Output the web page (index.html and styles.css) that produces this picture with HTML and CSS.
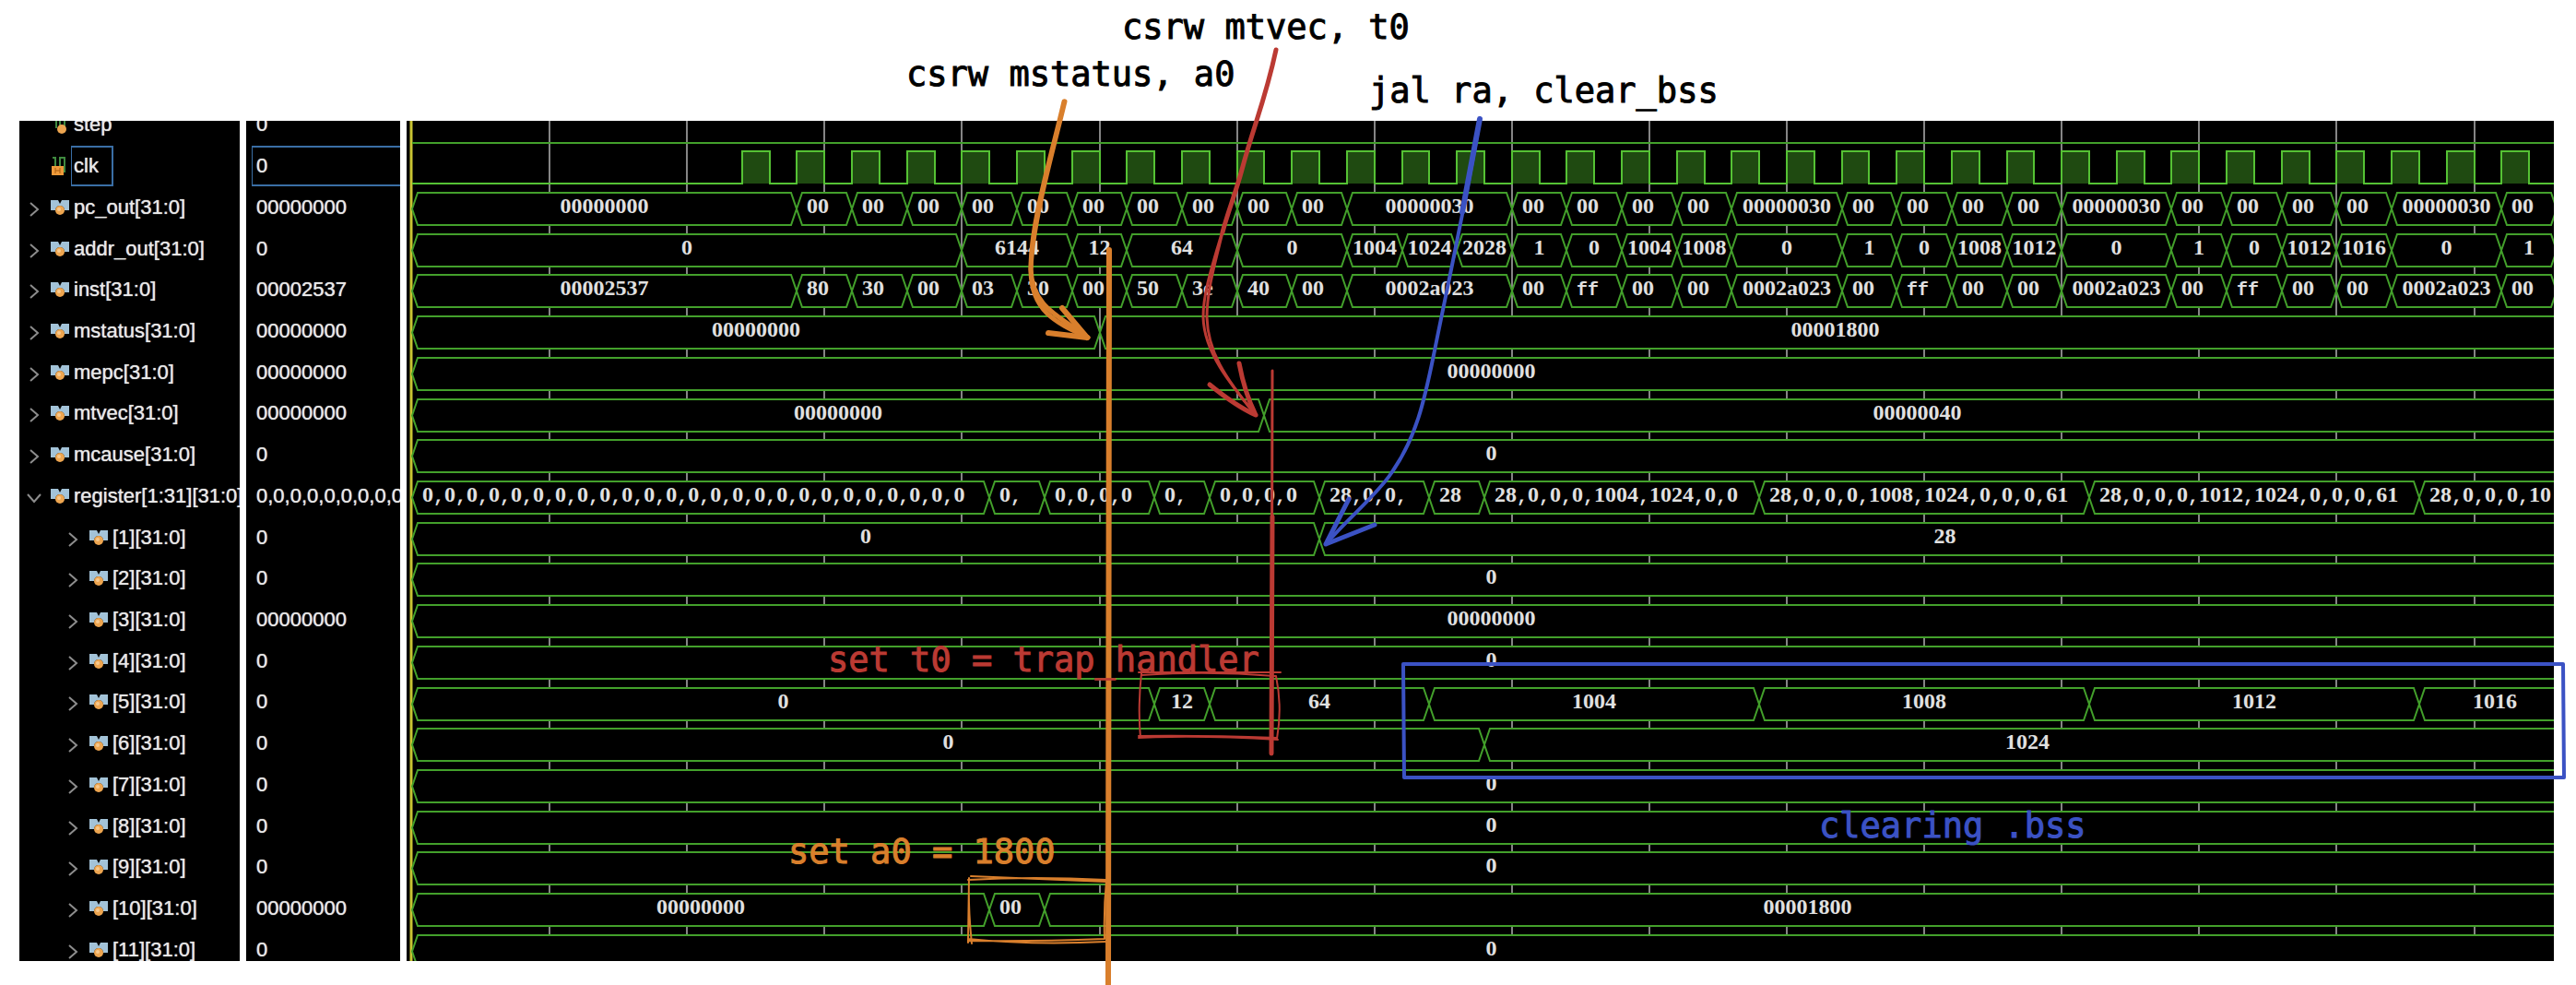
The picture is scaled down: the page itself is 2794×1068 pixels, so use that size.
FILE: index.html
```html
<!DOCTYPE html>
<html lang="en">
<head>
  <meta charset="utf-8">
  <meta name="viewport" content="width=device-width, initial-scale=1">
  <title>Boot waveform</title>
  <link rel="stylesheet" href="styles.css">
</head>
<body>
  <svg class="symbols" aria-hidden="true">
    <symbol id="icon-bus" viewBox="0 0 20 16">
      <path d="M0 0h8l2 4 2-4h8v11h-5a5 5 0 0 0-10 0H0z" fill="#a3c3d8"/>
      <circle cx="10" cy="11" r="5" fill="#eda550"/>
      <circle cx="9" cy="10" r="2" fill="#f8c98c"/>
    </symbol>
    <symbol id="icon-bit" viewBox="0 0 20 20">
      <path d="M3 1h3v13M10 14V1h5v12" fill="none" stroke="#3f8a3f" stroke-width="2"/>
      <circle cx="12" cy="15" r="5" fill="#eda550"/>
    </symbol>
    <symbol id="icon-clock" viewBox="0 0 20 20">
      <path d="M2 1h3v9M10 10V1h5v16" fill="none" stroke="#3f8a3f" stroke-width="2"/>
      <path d="M1 10h13v10H1z" fill="#ee9a3a"/>
      <path d="M5 12v6M10 12v6M5 15h5" fill="none" stroke="#a85c10" stroke-width="1"/>
    </symbol>
    <symbol id="icon-closed" viewBox="0 0 16 16">
      <path d="M4 1l8 7-8 7" fill="none" stroke="#8d8d8d" stroke-width="2"/>
    </symbol>
    <symbol id="icon-open" viewBox="0 0 16 16">
      <path d="M1 4l7 8 7-8" fill="none" stroke="#8d8d8d" stroke-width="2"/>
    </symbol>
  </svg>

  <main class="figure">
    <section class="viewer" aria-label="Waveform viewer">
      <div class="pane names"><ul class="rows" id="names"></ul></div>
      <div class="pane values"><ul class="rows" id="values"></ul></div>
      <div class="pane waves"><svg class="plot" id="plot" role="img" aria-label="Signal waveforms"></svg></div>
    </section>

    <svg class="notes" viewBox="0 0 2794 1068">
      <g class="ink orange">
        <path class="w5" d="M1154 110C1139 175 1118 240 1118 292C1118 338 1146 350 1180 366"/>
        <path class="w5" d="M1155 110C1143 160 1120 240 1118 292C1120 334 1150 343 1180 366"/>
        <path class="w6" d="M1152 334L1179 366M1137 361L1179 366"/>
        <path class="w6" d="M1203 271L1202 1070"/>
        <path class="w2" d="M1053 950L1200 956M1050 954Q1120 950 1200 954M1051 952L1050 1022M1051 952Q1050 985 1054 1023M1050 1018Q1120 1025 1200 1021M1050 1020Q1120 1021 1198 1018M1200 955Q1197 985 1198 1018"/>
      </g>
      <g class="ink red">
        <path class="w5" d="M1384 54C1372 110 1360 135 1347 184C1340 210 1331 232 1326 252"/>
        <path class="w3" d="M1329 240C1316 285 1305 315 1305 344C1306 382 1334 416 1362 450"/>
        <path class="w3" d="M1326 252C1318 285 1309 315 1309 344C1310 380 1327 408 1362 450"/>
        <path class="w5" d="M1344 394Q1350 426 1362 450M1312 417Q1340 440 1362 450"/>
        <path class="w3" d="M1380 402L1379 817"/>
        <path class="w5" d="M1380 560L1379 817"/>
        <path class="w2" d="M1235 729L1389 729M1238 732Q1310 727 1383 733M1384 733Q1391 767 1385 801M1238 730Q1234 767 1237 800M1235 798Q1300 797 1385 800M1235 800Q1300 797 1386 802"/>
      </g>
      <g class="ink blue">
        <path class="w4" d="M1605 129C1594 200 1570 310 1555 385C1545 434 1536 475 1509 513C1494 536 1462 562 1438 590"/>
        <path class="w6" d="M1605 129L1586 230"/>
        <path class="w5" d="M1463 541L1438 590M1491 569L1438 590"/>
        <path class="w4" d="M1522 720H2780L2781 843H1523Z"/>
      </g>
      <g class="caption">
        <text x="1217" y="42">csrw mtvec, t0</text>
        <text x="983" y="93">csrw mstatus, a0</text>
        <text x="1485" y="111">jal ra, clear_bss</text>
        <text class="red" x="898" y="728">set t0 = trap_handler</text>
        <text class="orange" x="855" y="936">set a0 = 1800</text>
        <text class="blue" x="1973" y="908">clearing .bss</text>
      </g>
    </svg>
  </main>
  <script src="waves.js"></script>
</body>
</html>
```
FILE: styles.css
```css
* {
  box-sizing: border-box;
}

body {
  margin: 0;
  background: #fff;
  font-family: "Liberation Sans", Arial, sans-serif;
}

.symbols {
  display: none;
}

.figure {
  position: relative;
  padding: 131px 24px 26px 21px;
  overflow: hidden;
}

/* three panes separated by light splitters */
.viewer {
  display: grid;
  grid-template-columns: 239px 167px 1fr;
  gap: 7px;
  height: 911px;
}

.pane {
  overflow: hidden;
  background: #000;
}

.rows {
  display: flex;
  flex-direction: column;
  height: 939px;
  margin: -18px 0 0;
  padding: 0;
  list-style: none;
  color: #e8e8e8;
  font-size: 22px;
  text-shadow: 0 0 1px currentColor;
  white-space: nowrap;
}

.rows li {
  flex: 1;
  display: flex;
  align-items: center;
}

.names li {
  padding-left: 8px;
}

.names li.child {
  padding-left: 50px;
}

.toggle {
  flex: none;
  width: 16px;
  height: 16px;
  margin: 4px 10px 0 0;
  padding: 0;
  border: 0;
  background: none;
}

.toggle svg {
  display: block;
  width: 16px;
  height: 16px;
}

.icon {
  flex: none;
  width: 20px;
  height: 16px;
  margin-right: 2px;
}

.icon.bit {
  height: 20px;
}

.label {
  display: flex;
  align-items: center;
  align-self: stretch;
  padding: 0 14px 0 2px;
  border: 2px solid transparent;
  border-left-width: 1px;
}

.label.selected {
  border-color: #3a6ea5;
}

.values .label {
  flex: 1;
  margin-left: 6px;
  padding-left: 4px;
  border-right: 0;
}

.plot {
  display: block;
  width: 100%;
  height: 100%;
}

.grid {
  stroke: #858585;
  stroke-width: 2;
}

.cursor {
  stroke: #c9c432;
  stroke-width: 3;
}

.bus {
  fill: #000;
  stroke: #43a02b;
  stroke-width: 2;
}

.level {
  fill: none;
  stroke: #43a02b;
  stroke-width: 2;
}

.clock {
  fill: #1f4a11;
  stroke: #55c234;
  stroke-width: 2;
}

.value {
  fill: #e0e0e0;
  font: bold 24px "Liberation Serif", "Times New Roman", serif;
}

.value .cell {
  font: bold 20px "Liberation Mono", "Courier New", monospace;
}

/* hand-drawn remarks lie over the panes */
.notes {
  position: absolute;
  top: 0;
  left: 0;
  width: 100%;
  pointer-events: none;
}

.ink {
  fill: none;
  stroke: currentColor;
  stroke-linecap: round;
  stroke-linejoin: round;
}

.w2 { stroke-width: 2; }
.w3 { stroke-width: 3; }
.w4 { stroke-width: 4; }
.w5 { stroke-width: 5; }
.w6 { stroke-width: 6; }

.orange { color: #d97f2c; }
.red { color: #bb3a33; }
.blue { color: #3b52c4; }

.caption {
  font: 37px "DejaVu Sans Mono", monospace;
}

.caption text {
  fill: currentColor;
  stroke: currentColor;
  stroke-width: 1;
}
```
FILE: waves.js
```js
// Times are in clock periods; each change is [start, text].
// A text marked "<" did not fit its slot and is left-aligned.
const END = 39.25;
const VISIBLE = 38.95;
const ROWS = 21;
const OFFSET = 18;

const signals = [
  { name: "step", value: "0", icon: "bit", kind: "level" },
  { name: "clk", value: "0", icon: "clock", kind: "clock", selected: true },
  { name: "pc_out[31:0]", value: "00000000", wave: [[0, "00000000"], [7, "<00"], [8, "<00"], [9, "<00"], [10, "<00"], [11, "<00"], [12, "<00"], [13, "<00"], [14, "<00"], [15, "<00"], [16, "<00"], [17, "00000030"], [20, "<00"], [21, "<00"], [22, "<00"], [23, "<00"], [24, "00000030"], [26, "<00"], [27, "<00"], [28, "<00"], [29, "<00"], [30, "00000030"], [32, "<00"], [33, "<00"], [34, "<00"], [35, "<00"], [36, "00000030"], [38, "<00"], [39, ""]] },
  { name: "addr_out[31:0]", value: "0", wave: [[0, "0"], [10, "6144"], [12, "12"], [13, "64"], [15, "0"], [17, "1004"], [18, "1024"], [19, "2028"], [20, "1"], [21, "0"], [22, "1004"], [23, "1008"], [24, "0"], [26, "1"], [27, "0"], [28, "1008"], [29, "1012"], [30, "0"], [32, "1"], [33, "0"], [34, "1012"], [35, "1016"], [36, "0"], [38, "1"], [39, ""]] },
  { name: "inst[31:0]", value: "00002537", wave: [[0, "00002537"], [7, "<80"], [8, "<30"], [9, "<00"], [10, "<03"], [11, "<30"], [12, "<00"], [13, "<50"], [14, "<3e"], [15, "<40"], [16, "<00"], [17, "0002a023"], [20, "<00"], [21, "<ff"], [22, "<00"], [23, "<00"], [24, "0002a023"], [26, "<00"], [27, "<ff"], [28, "<00"], [29, "<00"], [30, "0002a023"], [32, "<00"], [33, "<ff"], [34, "<00"], [35, "<00"], [36, "0002a023"], [38, "<00"], [39, ""]] },
  { name: "mstatus[31:0]", value: "00000000", wave: [[0, "00000000"], [12.5, "00001800"]] },
  { name: "mepc[31:0]", value: "00000000", wave: [[0, "00000000"]] },
  { name: "mtvec[31:0]", value: "00000000", wave: [[0, "00000000"], [15.5, "00000040"]] },
  { name: "mcause[31:0]", value: "0", wave: [[0, "0"]] },
  { name: "register[1:31][31:0]", value: "0,0,0,0,0,0,0,0,0", open: true, wave: [[0, "<0,0,0,0,0,0,0,0,0,0,0,0,0,0,0,0,0,0,0,0,0,0,0,0,0"], [10.5, "<0,"], [11.5, "<0,0,0,0"], [13.5, "<0,"], [14.5, "<0,0,0,0"], [16.5, "<28,0,0,"], [18.5, "<28"], [19.5, "<28,0,0,0,1004,1024,0,0"], [24.5, "<28,0,0,0,1008,1024,0,0,0,61"], [30.5, "<28,0,0,0,1012,1024,0,0,0,61"], [36.5, "<28,0,0,0,10"]] },
  { name: "[1][31:0]", value: "0", child: true, wave: [[0, "0"], [16.5, "28"]] },
  { name: "[2][31:0]", value: "0", child: true, wave: [[0, "0"]] },
  { name: "[3][31:0]", value: "00000000", child: true, wave: [[0, "00000000"]] },
  { name: "[4][31:0]", value: "0", child: true, wave: [[0, "0"]] },
  { name: "[5][31:0]", value: "0", child: true, wave: [[0, "0"], [13.5, "12"], [14.5, "64"], [18.5, "1004"], [24.5, "1008"], [30.5, "1012"], [36.5, "1016"]] },
  { name: "[6][31:0]", value: "0", child: true, wave: [[0, "0"], [19.5, "1024"]] },
  { name: "[7][31:0]", value: "0", child: true, wave: [[0, "0"]] },
  { name: "[8][31:0]", value: "0", child: true, wave: [[0, "0"]] },
  { name: "[9][31:0]", value: "0", child: true, wave: [[0, "0"]] },
  { name: "[10][31:0]", value: "00000000", child: true, wave: [[0, "00000000"], [10.5, "<00"], [11.5, "00001800"]] },
  { name: "[11][31:0]", value: "0", child: true, wave: [[0, "0"]] }
];

function nameRow(s) {
  const toggle = s.kind
    ? '<span class="toggle"></span>'
    : `<button class="toggle" type="button" aria-label="Expand ${s.name}"><svg><use href="#icon-${s.open ? "open" : "closed"}"/></svg></button>`;
  return `<li class="${s.child ? "child" : ""}">${toggle}` +
    `<svg class="icon ${s.kind ? "bit" : ""}"><use href="#icon-${s.icon || "bus"}"/></svg>` +
    `<span class="label ${s.selected ? "selected" : ""}">${s.name}</span></li>`;
}

function valueRow(s) {
  return `<li><span class="label ${s.selected ? "selected" : ""}">${s.value}</span></li>`;
}

// Digits are half an em wide; commas and f go in cells of the same width.
function cells(text) {
  return text.replace(/[,f]+/g, m => `<tspan class="cell">${m}</tspan>`);
}

function draw() {
  const plot = document.getElementById("plot");
  const width = plot.clientWidth;
  const height = plot.clientHeight;
  const left = 6;
  const unit = (width - left) / VISIBLE;
  const x = t => Math.round(left + unit * t);
  const rowHeight = (height + 28) / ROWS;
  let out = "";

  for (let t = 2.5; t < END; t += 2.5) {
    out += `<line class="grid" x1="${x(t)}" x2="${x(t)}" y1="0" y2="${height}"/>`;
  }
  out += `<line class="cursor" x1="${left - 1}" x2="${left - 1}" y1="0" y2="${height}"/>`;

  signals.forEach((s, i) => {
    const y = Math.floor(i * rowHeight) - OFFSET;
    const top = y + 7;
    const bottom = y + 42;
    if (s.kind === "level") {
      out += `<path class="level" d="M${left} ${bottom}H${width}"/>`;
      return;
    }
    if (s.kind === "clock") {
      let d = `M${left} ${bottom}`;
      for (let t = 6; t < VISIBLE; t += 1) {
        d += `H${x(t)}V${top}H${x(t + 0.5)}V${bottom}`;
      }
      out += `<path class="clock" d="${d}H${width}"/>`;
      return;
    }
    const middle = (top + bottom) / 2;
    s.wave.forEach(([start, text], n) => {
      const end = n + 1 < s.wave.length ? s.wave[n + 1][0] : END;
      const a = x(start);
      const b = end === END ? x(END) + 20 : x(end);
      out += `<path class="bus" d="M${a} ${middle}L${a + 6} ${top}H${b - 6}L${b} ${middle}L${b - 6} ${bottom}H${a + 6}Z"/>`;
      if (text[0] === "<") {
        out += `<text class="value" x="${a + 11}" y="${y + 29}">${cells(text.slice(1))}</text>`;
      } else {
        out += `<text class="value" text-anchor="middle" x="${(a + x(end)) / 2}" y="${y + 29}">${cells(text)}</text>`;
      }
    });
  });
  plot.innerHTML = out;
}

document.getElementById("names").innerHTML = signals.map(nameRow).join("");
document.getElementById("values").innerHTML = signals.map(valueRow).join("");
draw();
window.addEventListener("resize", draw);
```
